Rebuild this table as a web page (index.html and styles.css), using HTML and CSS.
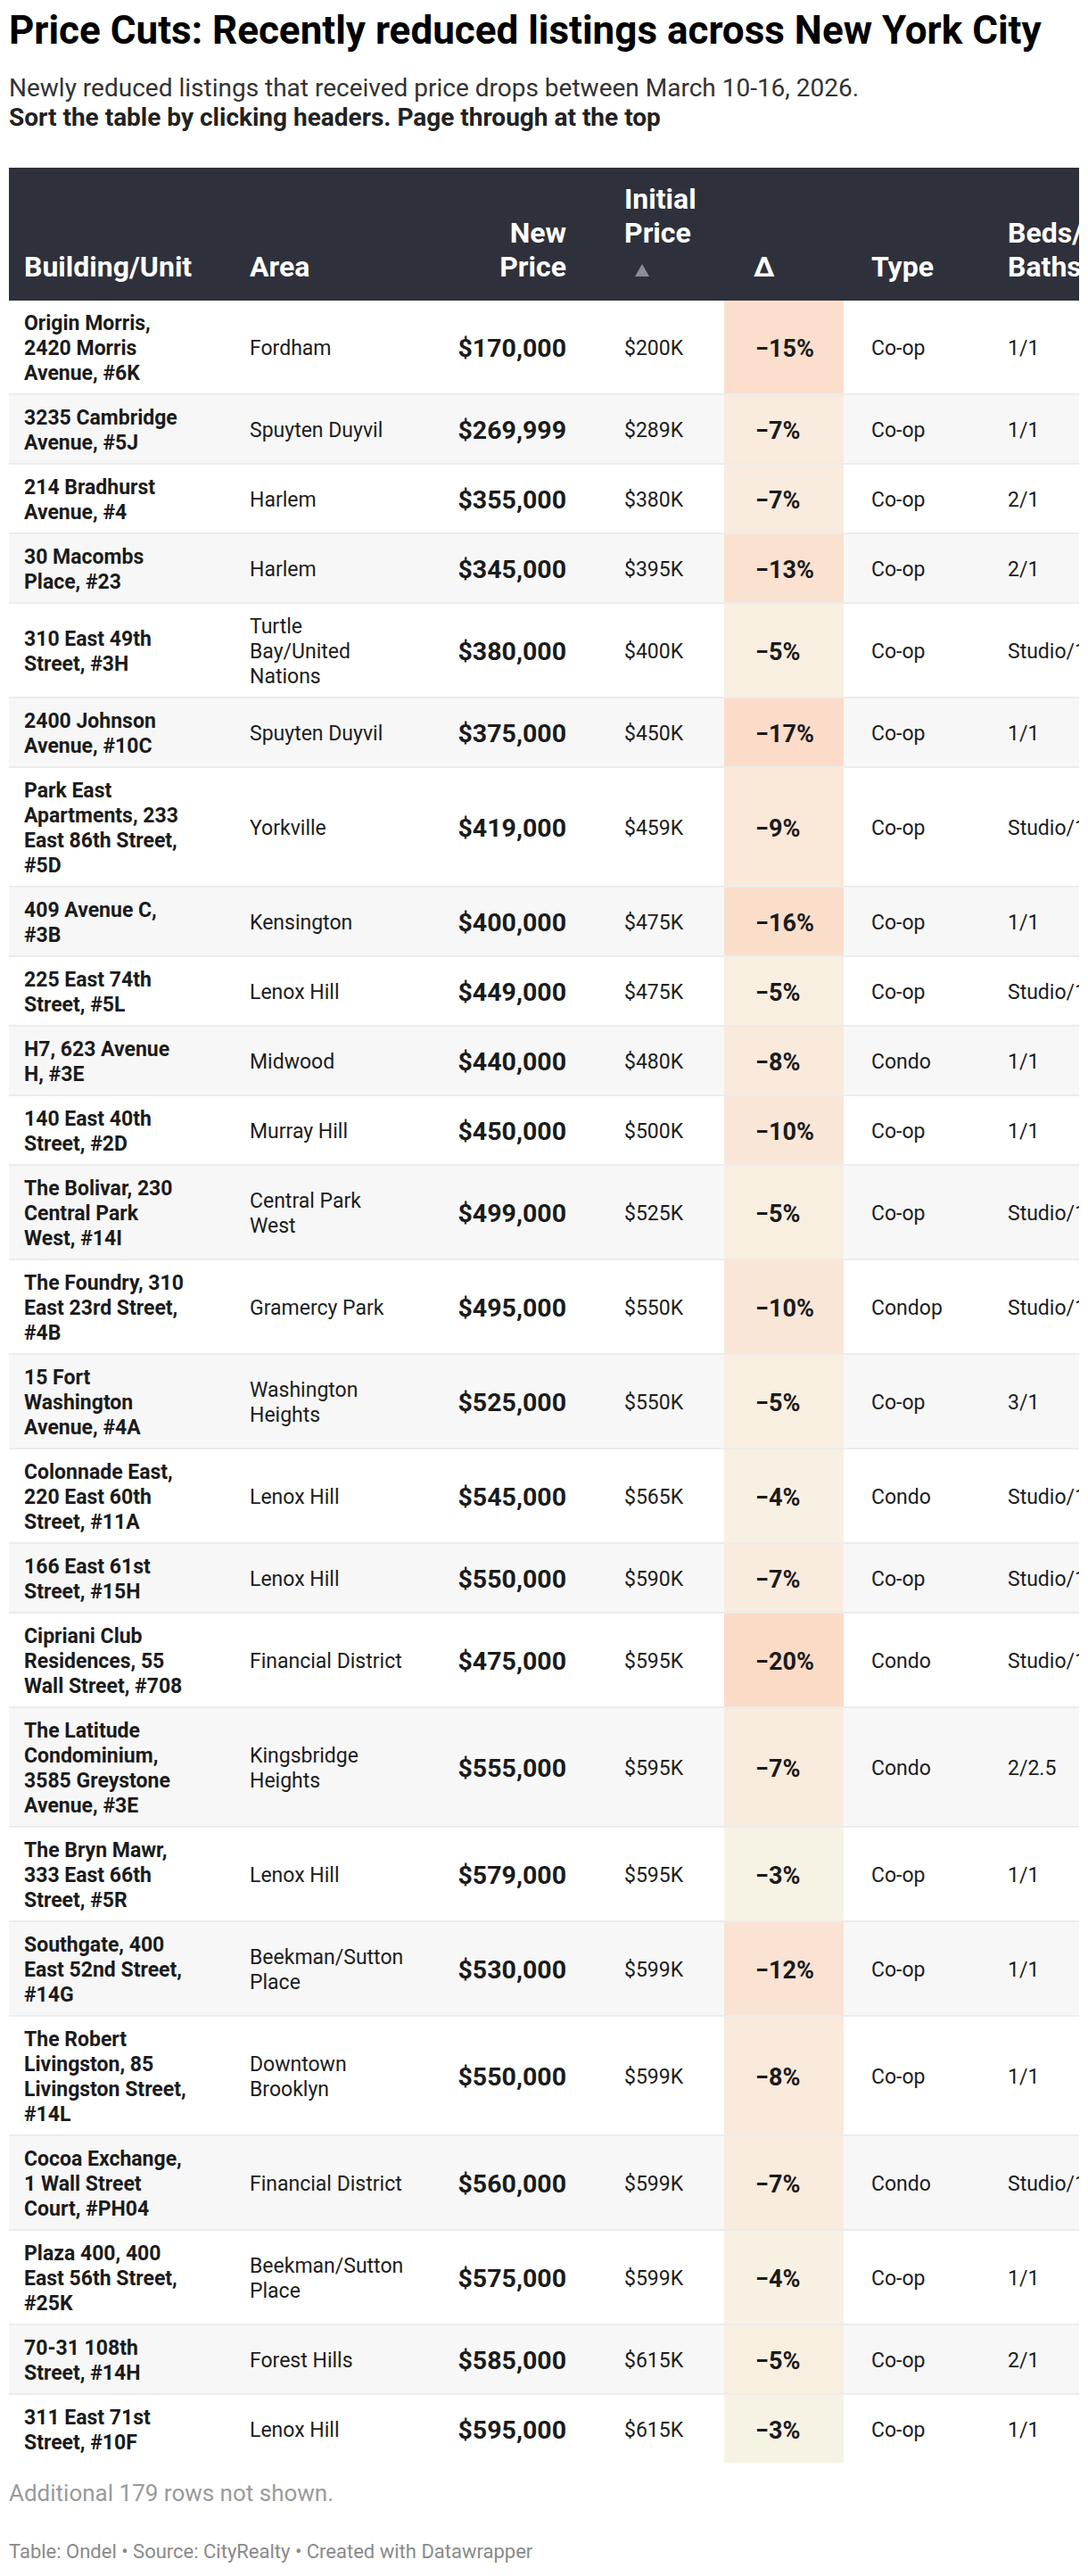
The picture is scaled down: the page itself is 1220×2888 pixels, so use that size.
FILE: index.html
```html
<!DOCTYPE html>
<html lang="en">
<head>
<meta charset="utf-8">
<title>Price Cuts</title>
<link rel="stylesheet" href="styles.css">
</head>
<body>
<div class="chart">
  <h1 class="title">Price Cuts: Recently reduced listings across New York City</h1>
  <p class="desc">Newly reduced listings that received price drops between March 10-16, 2026.<br><b>Sort the table by clicking headers. Page through at the top</b></p>
  <div class="table-wrap">
    <table class="tbl">
      <colgroup>
        <col class="w-bld"><col class="w-area"><col class="w-new"><col class="w-init"><col class="w-delta"><col class="w-type"><col class="w-beds">
      </colgroup>
      <thead>
        <tr>
          <th class="c-bld">Building/Unit</th>
          <th class="c-area">Area</th>
          <th class="c-new">New<br>Price</th>
          <th class="c-init">Initial<br>Price<br><span class="sort"><svg width="16" height="14" viewBox="0 0 16 14"><polygon points="8,0 16,14 0,14" fill="#8a8d95"/></svg></span></th>
          <th class="c-delta">Δ</th>
          <th class="c-type">Type</th>
          <th class="c-beds">Beds/<br>Baths</th>
        </tr>
      </thead>
      <tbody>
        <tr><td class="c-bld">Origin Morris,<br>2420 Morris<br>Avenue, #6K</td><td class="c-area">Fordham</td><td class="c-new">$170,000</td><td class="c-init">$200K</td><td class="c-delta" style="background:#fbdfcc">−15%</td><td class="c-type">Co-op</td><td class="c-beds">1/1</td></tr>
        <tr><td class="c-bld">3235 Cambridge<br>Avenue, #5J</td><td class="c-area">Spuyten Duyvil</td><td class="c-new">$269,999</td><td class="c-init">$289K</td><td class="c-delta" style="background:#f9ebdd">−7%</td><td class="c-type">Co-op</td><td class="c-beds">1/1</td></tr>
        <tr><td class="c-bld">214 Bradhurst<br>Avenue, #4</td><td class="c-area">Harlem</td><td class="c-new">$355,000</td><td class="c-init">$380K</td><td class="c-delta" style="background:#f9ebdd">−7%</td><td class="c-type">Co-op</td><td class="c-beds">2/1</td></tr>
        <tr><td class="c-bld">30 Macombs<br>Place, #23</td><td class="c-area">Harlem</td><td class="c-new">$345,000</td><td class="c-init">$395K</td><td class="c-delta" style="background:#fbe1cf">−13%</td><td class="c-type">Co-op</td><td class="c-beds">2/1</td></tr>
        <tr><td class="c-bld">310 East 49th<br>Street, #3H</td><td class="c-area">Turtle<br>Bay/United<br>Nations</td><td class="c-new">$380,000</td><td class="c-init">$400K</td><td class="c-delta" style="background:#f8efe1">−5%</td><td class="c-type">Co-op</td><td class="c-beds">Studio/1</td></tr>
        <tr><td class="c-bld">2400 Johnson<br>Avenue, #10C</td><td class="c-area">Spuyten Duyvil</td><td class="c-new">$375,000</td><td class="c-init">$450K</td><td class="c-delta" style="background:#fcdcc9">−17%</td><td class="c-type">Co-op</td><td class="c-beds">1/1</td></tr>
        <tr><td class="c-bld">Park East<br>Apartments, 233<br>East 86th Street,<br>#5D</td><td class="c-area">Yorkville</td><td class="c-new">$419,000</td><td class="c-init">$459K</td><td class="c-delta" style="background:#fae8d9">−9%</td><td class="c-type">Co-op</td><td class="c-beds">Studio/1</td></tr>
        <tr><td class="c-bld">409 Avenue C,<br>#3B</td><td class="c-area">Kensington</td><td class="c-new">$400,000</td><td class="c-init">$475K</td><td class="c-delta" style="background:#fbdeca">−16%</td><td class="c-type">Co-op</td><td class="c-beds">1/1</td></tr>
        <tr><td class="c-bld">225 East 74th<br>Street, #5L</td><td class="c-area">Lenox Hill</td><td class="c-new">$449,000</td><td class="c-init">$475K</td><td class="c-delta" style="background:#f8efe1">−5%</td><td class="c-type">Co-op</td><td class="c-beds">Studio/1</td></tr>
        <tr><td class="c-bld">H7, 623 Avenue<br>H, #3E</td><td class="c-area">Midwood</td><td class="c-new">$440,000</td><td class="c-init">$480K</td><td class="c-delta" style="background:#f9eadb">−8%</td><td class="c-type">Condo</td><td class="c-beds">1/1</td></tr>
        <tr><td class="c-bld">140 East 40th<br>Street, #2D</td><td class="c-area">Murray Hill</td><td class="c-new">$450,000</td><td class="c-init">$500K</td><td class="c-delta" style="background:#fae6d7">−10%</td><td class="c-type">Co-op</td><td class="c-beds">1/1</td></tr>
        <tr><td class="c-bld">The Bolivar, 230<br>Central Park<br>West, #14I</td><td class="c-area">Central Park<br>West</td><td class="c-new">$499,000</td><td class="c-init">$525K</td><td class="c-delta" style="background:#f8efe1">−5%</td><td class="c-type">Co-op</td><td class="c-beds">Studio/1</td></tr>
        <tr><td class="c-bld">The Foundry, 310<br>East 23rd Street,<br>#4B</td><td class="c-area">Gramercy Park</td><td class="c-new">$495,000</td><td class="c-init">$550K</td><td class="c-delta" style="background:#fae6d7">−10%</td><td class="c-type">Condop</td><td class="c-beds">Studio/1</td></tr>
        <tr><td class="c-bld">15 Fort<br>Washington<br>Avenue, #4A</td><td class="c-area">Washington<br>Heights</td><td class="c-new">$525,000</td><td class="c-init">$550K</td><td class="c-delta" style="background:#f8efe1">−5%</td><td class="c-type">Co-op</td><td class="c-beds">3/1</td></tr>
        <tr><td class="c-bld">Colonnade East,<br>220 East 60th<br>Street, #11A</td><td class="c-area">Lenox Hill</td><td class="c-new">$545,000</td><td class="c-init">$565K</td><td class="c-delta" style="background:#f7f1e3">−4%</td><td class="c-type">Condo</td><td class="c-beds">Studio/1</td></tr>
        <tr><td class="c-bld">166 East 61st<br>Street, #15H</td><td class="c-area">Lenox Hill</td><td class="c-new">$550,000</td><td class="c-init">$590K</td><td class="c-delta" style="background:#f9ebdd">−7%</td><td class="c-type">Co-op</td><td class="c-beds">Studio/1</td></tr>
        <tr><td class="c-bld">Cipriani Club<br>Residences, 55<br>Wall Street, #708</td><td class="c-area">Financial District</td><td class="c-new">$475,000</td><td class="c-init">$595K</td><td class="c-delta" style="background:#fcdbc6">−20%</td><td class="c-type">Condo</td><td class="c-beds">Studio/1</td></tr>
        <tr><td class="c-bld">The Latitude<br>Condominium,<br>3585 Greystone<br>Avenue, #3E</td><td class="c-area">Kingsbridge<br>Heights</td><td class="c-new">$555,000</td><td class="c-init">$595K</td><td class="c-delta" style="background:#f9ebdd">−7%</td><td class="c-type">Condo</td><td class="c-beds">2/2.5</td></tr>
        <tr><td class="c-bld">The Bryn Mawr,<br>333 East 66th<br>Street, #5R</td><td class="c-area">Lenox Hill</td><td class="c-new">$579,000</td><td class="c-init">$595K</td><td class="c-delta" style="background:#f6f3e5">−3%</td><td class="c-type">Co-op</td><td class="c-beds">1/1</td></tr>
        <tr><td class="c-bld">Southgate, 400<br>East 52nd Street,<br>#14G</td><td class="c-area">Beekman/Sutton<br>Place</td><td class="c-new">$530,000</td><td class="c-init">$599K</td><td class="c-delta" style="background:#fae3d3">−12%</td><td class="c-type">Co-op</td><td class="c-beds">1/1</td></tr>
        <tr><td class="c-bld">The Robert<br>Livingston, 85<br>Livingston Street,<br>#14L</td><td class="c-area">Downtown<br>Brooklyn</td><td class="c-new">$550,000</td><td class="c-init">$599K</td><td class="c-delta" style="background:#f9eadb">−8%</td><td class="c-type">Co-op</td><td class="c-beds">1/1</td></tr>
        <tr><td class="c-bld">Cocoa Exchange,<br>1 Wall Street<br>Court, #PH04</td><td class="c-area">Financial District</td><td class="c-new">$560,000</td><td class="c-init">$599K</td><td class="c-delta" style="background:#f9ebdd">−7%</td><td class="c-type">Condo</td><td class="c-beds">Studio/1</td></tr>
        <tr><td class="c-bld">Plaza 400, 400<br>East 56th Street,<br>#25K</td><td class="c-area">Beekman/Sutton<br>Place</td><td class="c-new">$575,000</td><td class="c-init">$599K</td><td class="c-delta" style="background:#f7f1e3">−4%</td><td class="c-type">Co-op</td><td class="c-beds">1/1</td></tr>
        <tr><td class="c-bld">70-31 108th<br>Street, #14H</td><td class="c-area">Forest Hills</td><td class="c-new">$585,000</td><td class="c-init">$615K</td><td class="c-delta" style="background:#f8efe1">−5%</td><td class="c-type">Co-op</td><td class="c-beds">2/1</td></tr>
        <tr><td class="c-bld">311 East 71st<br>Street, #10F</td><td class="c-area">Lenox Hill</td><td class="c-new">$595,000</td><td class="c-init">$615K</td><td class="c-delta" style="background:#f6f3e5">−3%</td><td class="c-type">Co-op</td><td class="c-beds">1/1</td></tr>
      </tbody>
    </table>
  </div>
  <p class="note">Additional 179 rows not shown.</p>
  <p class="foot">Table: Ondel • Source: CityRealty • Created with Datawrapper</p>
</div>
</body>
</html>
```
FILE: styles.css
```css
* { box-sizing: border-box; }

body {
  margin: 0;
  background: #ffffff;
  font-family: Roboto, "Liberation Sans", Arial, sans-serif;
  color: #1d1d1d;
}

.chart {
  padding: 9px 10px 0;
}

.title {
  margin: 0;
  font-size: 44px;
  line-height: 50px;
  font-weight: 700;
  color: #000000;
}

.desc {
  margin: 23px 0 0;
  font-size: 28px;
  line-height: 33px;
  color: #333333;
}

.desc b {
  font-weight: 700;
  color: #222222;
}

.table-wrap {
  margin-top: 40px;
  width: 1200px;
  overflow: hidden;
}

.tbl {
  border-collapse: collapse;
  table-layout: fixed;
  width: 1230px;
}

.w-bld { width: 253px; }
.w-area { width: 220px; }
.w-new { width: 185px; }
.w-init { width: 144px; }
.w-delta { width: 134px; }
.w-type { width: 165px; }
.w-beds { width: 129px; }

.tbl th {
  background: #2e313b;
  color: #ffffff;
  font-size: 32px;
  line-height: 38px;
  font-weight: 700;
  text-align: left;
  vertical-align: bottom;
  padding: 16px 0 19px;
  white-space: nowrap;
}

.tbl td {
  vertical-align: middle;
  padding: 12px 0 8px;
  border-bottom: 2px solid rgba(0, 0, 0, 0.075);
  font-size: 23px;
  line-height: 28px;
  white-space: nowrap;
  overflow: hidden;
}

.tbl tbody tr:nth-child(even) td {
  background-color: #f7f7f7;
}

.tbl tbody tr:last-child td {
  border-bottom: none;
}

.c-bld { padding-left: 17px !important; }
.c-area { padding-left: 17px !important; }
.c-new { text-align: right !important; padding-right: 33px !important; }
.c-init { padding-left: 32px !important; }
.c-delta { padding-left: 35px !important; }
.c-type { padding-left: 31px !important; }
.c-beds { padding-left: 19px !important; }

th.c-delta { padding-left: 33px !important; }

td.c-bld {
  font-weight: 700;
  color: #1b1b1b;
}

td.c-new {
  font-weight: 700;
  font-size: 28.5px;
  color: #1b1b1b;
}

td.c-delta {
  font-weight: 700;
  font-size: 27px;
  color: #1b1b1b;
}

.sort {
  display: inline-block;
  margin-left: 12px;
  line-height: 0;
  vertical-align: baseline;
}

.note {
  margin: 19px 0 0;
  font-size: 26px;
  line-height: 30px;
  color: #9a9a9a;
}

.foot {
  margin: 38px 0 0;
  font-size: 22px;
  line-height: 26px;
  color: #8a8a8a;
}
```
